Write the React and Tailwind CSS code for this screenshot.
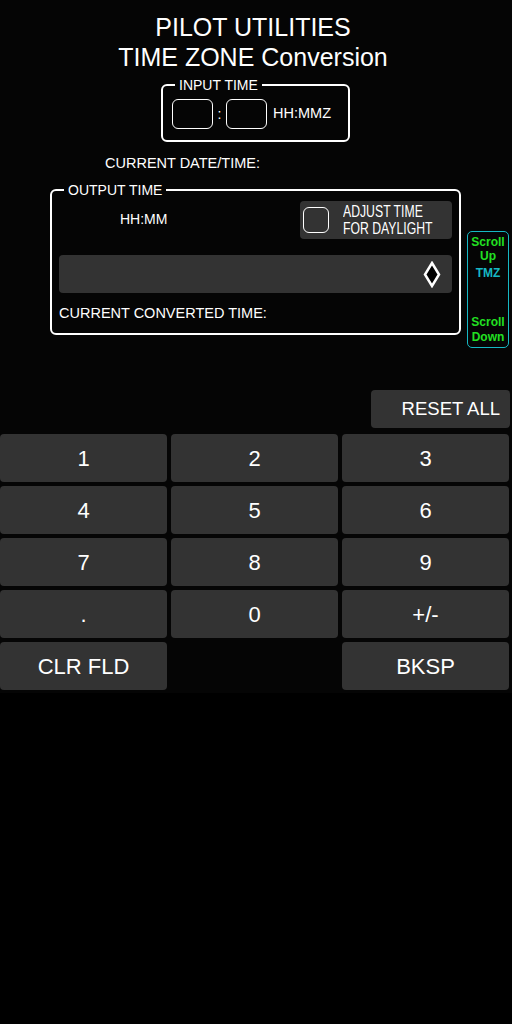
export default function App() {
  const keys = ["1", "2", "3", "4", "5", "6", "7", "8", "9", ".", "0", "+/-"];
  return (
    <div className="w-[512px] min-h-[1024px] bg-black text-white" style={{ fontFamily: '"Liberation Sans", Arial, sans-serif' }}>
      <div className="bg-[#050505] pb-[3px]">
        <div className="flex flex-col">
          <div className="pt-[12px] pr-[6px] text-[25px] leading-[30px] text-center">
            <div>PILOT UTILITIES</div>
            <div>TIME ZONE Conversion</div>
          </div>
          <div className="relative mt-[12px] ml-[161px] w-[189px] h-[58px] border-2 border-white rounded-[6px] flex items-center pl-[9px] pt-[2px]">
            <div className="absolute -top-[9px] left-[12px] bg-[#050505] px-[4px] text-[14px] leading-[16px]">INPUT TIME</div>
            <div className="w-[41px] h-[30px] border border-white rounded-[6px] shrink-0" />
            <div className="w-[13px] text-center text-[14px]">:</div>
            <div className="w-[41px] h-[30px] border border-white rounded-[6px] shrink-0" />
            <div className="ml-[6px] text-[14.5px]">HH:MMZ</div>
          </div>
        </div>
        <div className="mt-[13px] pl-[105px] text-[14.5px] leading-[16px]">CURRENT DATE/TIME:</div>
        <div className="flex mt-[18px]">
          <div className="relative ml-[50px] w-[411px] h-[146px] border-2 border-white rounded-[6px] px-[7px]">
            <div className="absolute -top-[9px] left-[12px] bg-[#050505] px-[4px] text-[14px] leading-[16px]">OUTPUT TIME</div>
            <div className="flex justify-between pt-[10px]">
              <div className="ml-[61px] mt-[10px] text-[14px] leading-[16px]">HH:MM</div>
              <div className="w-[152px] h-[38px] bg-[#333333] rounded-[4px] flex items-center pl-[3px] overflow-hidden">
                <div className="w-[26px] h-[26px] border border-white rounded-[6px] shrink-0" />
                <div className="ml-[14px] w-[100px] shrink-0">
                  <div className="text-[17px] leading-[17px] origin-left scale-x-[0.72] whitespace-nowrap">
                    <div>ADJUST TIME</div>
                    <div>FOR DAYLIGHT</div>
                  </div>
                </div>
              </div>
            </div>
            <div className="mt-[16px] h-[38px] bg-[#333333] rounded-[4px] flex items-center justify-end pr-[11px]">
              <svg width="18" height="27" viewBox="0 0 18 27">
                <polygon points="9,2 16,13.5 9,25 2,13.5" fill="black" stroke="white" strokeWidth="2.5" />
              </svg>
            </div>
            <div className="mt-[12px] text-[14.5px] leading-[16px]">CURRENT CONVERTED TIME:</div>
          </div>
          <div className="ml-[6px] mt-[42px] w-[42px] h-[117px] border border-[#16b8c4] rounded-[5px] flex flex-col items-center text-[12px] leading-[14px] font-bold pt-[3px]">
            <div className="text-[#22e022] text-center">Scroll<br />Up</div>
            <div className="text-[#16b8c4] mt-[3px]">TMZ</div>
            <div className="text-[#22e022] text-center mt-[35px] leading-[15px]">Scroll<br />Down</div>
          </div>
        </div>
        <div className="flex justify-end mt-[42px] pr-[2px]">
          <div className="w-[139px] h-[38px] bg-[#333333] rounded-[4px] flex items-center justify-end pr-[10px] text-[18.5px]">RESET ALL</div>
        </div>
        <div className="grid grid-cols-[167px_167px_167px] gap-[4px] mt-[6px]">
          {keys.map((k) => (
            <div key={k} className="h-[48px] bg-[#333333] rounded-[4px] flex items-center justify-center text-[22px]">{k}</div>
          ))}
          <div className="h-[48px] bg-[#333333] rounded-[4px] flex items-center justify-center text-[22px]">CLR FLD</div>
          <div />
          <div className="h-[48px] bg-[#333333] rounded-[4px] flex items-center justify-center text-[22px]">BKSP</div>
        </div>
      </div>
    </div>
  );
}
